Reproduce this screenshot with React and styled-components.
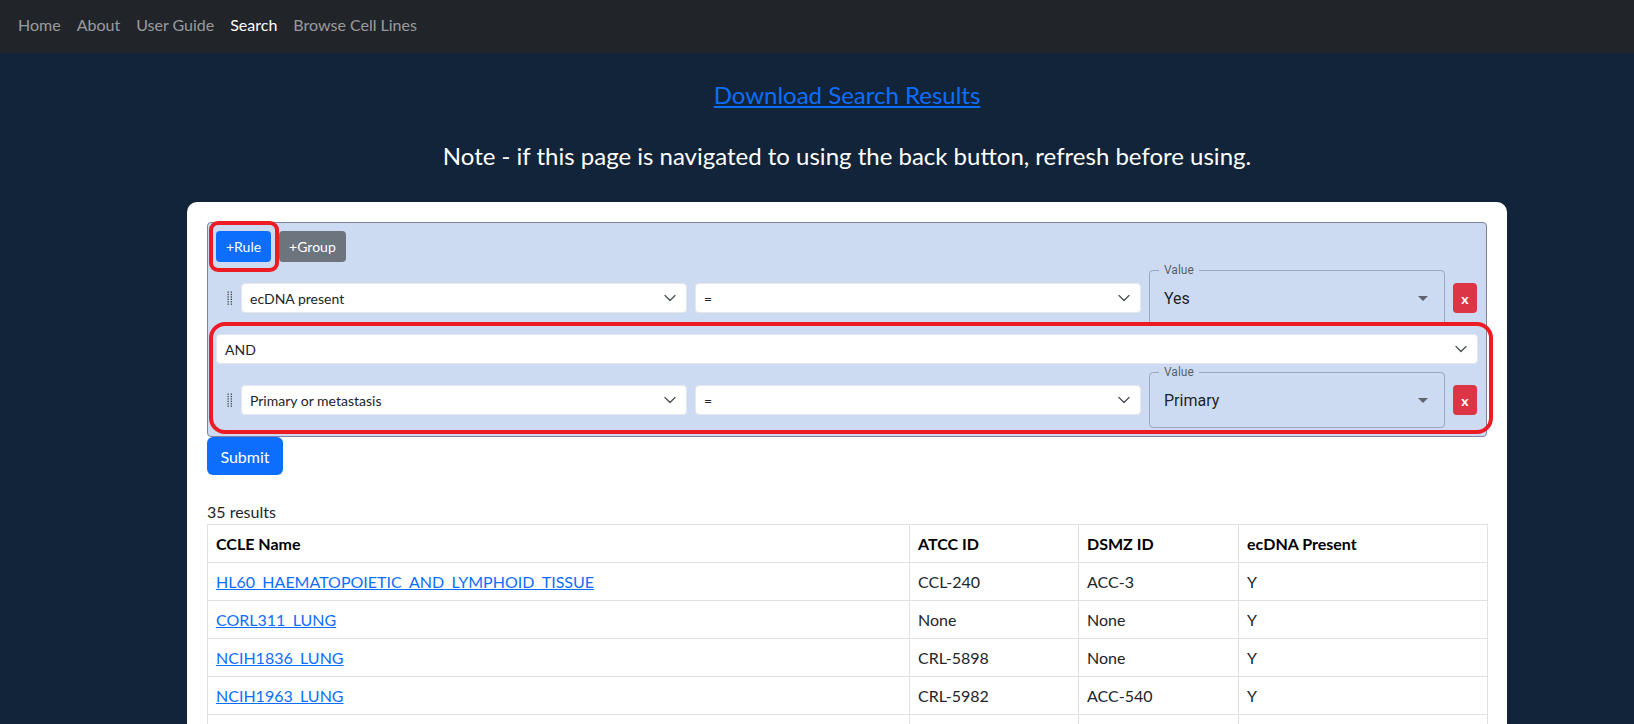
import React from "react";
import styled, { createGlobalStyle } from "styled-components";

const GlobalStyle = createGlobalStyle`
    body {
        margin: 0;
        background-color: #112439;
        font-family: Lato, "Liberation Sans", sans-serif;
        color: #212529;
        overflow: hidden;
    }
`

const Navbar = styled.nav`
    height: 53px;
    box-sizing: border-box;
    background-color: #212529;
    display: flex;
    align-items: center;
    padding: 0 10px 3px;
`

const NavLink = styled.a`
    padding: 8px;
    font-size: 16px;
    line-height: 24px;
    color: ${props => props.active ? '#ffffff' : 'rgba(255, 255, 255, 0.55)'};
    text-decoration: none;
`

const Main = styled.div`
    padding-left: 60px;
`

const Container = styled.div`
    max-width: 1320px;
    margin: 0 auto;
    display: flex;
    flex-direction: column;
    align-items: center;
`

const DownloadLink = styled.a`
    margin-top: 27px;
    font-size: 24px;
    line-height: 29px;
    color: #0d6efd;
    text-decoration: underline;
`

const Note = styled.div`
    margin-top: 32px;
    font-size: 24px;
    line-height: 29px;
    color: #ffffff;
`

const Card = styled.div`
    margin-top: 32px;
    width: 1320px;
    box-sizing: border-box;
    background-color: #ffffff;
    border-radius: 10px;
    padding: 20px;
`

const Builder = styled.div`
    position: relative;
    background-color: #ccdbf1;
    border: 1px solid #8081a2;
    border-radius: 4px;
    padding: 8px;
    display: flex;
    flex-direction: column;
    gap: 8px;
`

const Header = styled.div`
    display: flex;
    gap: 8px;
`

const SmallButton = styled.button`
    height: 31px;
    padding: 0 10px;
    border: none;
    border-radius: 4px;
    font-family: inherit;
    font-size: 14px;
    color: #ffffff;
    background-color: ${props => props.secondary ? '#6c757d' : '#0d6efd'};
`

const RuleRow = styled.div`
    display: flex;
    align-items: center;
    gap: 8px;
    height: 56px;
`

const Handle = styled.div`
    width: 17px;
    display: flex;
    justify-content: flex-end;
`

const Select = styled.div`
    width: ${props => props.width || '100%'};
    flex: none;
    height: 30px;
    box-sizing: border-box;
    background-color: #ffffff;
    border: 1px solid #e4e8ee;
    border-radius: 4px;
    padding: 0 8px;
    display: flex;
    align-items: center;
    justify-content: space-between;
    font-size: 14px;
    color: #212529;
`

const ValueBox = styled.div`
    position: relative;
    width: 296px;
    height: 56px;
    box-sizing: border-box;
    border: 1px solid rgba(0, 0, 0, 0.23);
    border-radius: 4px;
    padding: 0 9px 0 14px;
    display: flex;
    align-items: center;
    justify-content: space-between;
    font-family: Roboto, sans-serif;
    font-size: 16px;
    color: rgba(0, 0, 0, 0.87);
`

const ValueLabel = styled.span`
    position: absolute;
    top: -8px;
    left: 9px;
    padding: 0 5px;
    background-color: #ccdbf1;
    font-size: 12px;
    line-height: 14px;
    color: rgba(0, 0, 0, 0.6);
`

const RemoveButton = styled.button`
    width: 24px;
    height: 30px;
    padding: 0;
    border: none;
    border-radius: 4px;
    background-color: #dc3545;
    color: #ffffff;
    font-family: inherit;
    font-size: 14px;
    font-weight: bold;
`

const Highlight = styled.div`
    position: absolute;
    left: ${props => props.left}px;
    top: ${props => props.top}px;
    width: ${props => props.width}px;
    height: ${props => props.height}px;
    box-sizing: border-box;
    border: 4px solid #ed1c24;
    border-radius: ${props => props.radius}px;
    pointer-events: none;
`

const SubmitButton = styled.button`
    display: block;
    width: 76px;
    height: 38px;
    border: none;
    border-radius: 6px;
    background-color: #0d6efd;
    color: #ffffff;
    font-family: inherit;
    font-size: 16px;
`

const Results = styled.div`
    margin-top: 25px;
    font-size: 16px;
    line-height: 24px;
`

const Table = styled.table`
    width: 1280px;
    border-collapse: collapse;
    table-layout: fixed;
    font-size: 16px;
`

const Th = styled.th`
    border: 1px solid #dee2e6;
    padding: 7px 8px;
    line-height: 23px;
    text-align: left;
    font-weight: bold;
    color: #000000;
`

const Td = styled.td`
    border: 1px solid #dee2e6;
    padding: 7px 8px;
    line-height: 23px;
    color: #212529;
`

const CellLink = styled.a`
    color: #0d6efd;
    text-decoration: underline;
`

const Chevron = () => (
    <svg width="16" height="12" viewBox="0 2 16 12">
        <path fill="none" stroke="#4a4f55" strokeLinecap="round" strokeLinejoin="round" strokeWidth="1.3" d="m3 5.5 5 5 5-5" />
    </svg>
)

const DragDots = () => (
    <svg width="6" height="14" viewBox="0 0 6 14">
        {[0, 1, 2, 3, 4, 5].map(i => (
            <React.Fragment key={i}>
                <rect x="0.5" y={i * 2.4 + 0.5} width="1.3" height="1.3" fill="#444" />
                <rect x="3.7" y={i * 2.4 + 0.5} width="1.3" height="1.3" fill="#444" />
            </React.Fragment>
        ))}
    </svg>
)

const ArrowDrop = () => (
    <svg width="24" height="24" viewBox="0 0 24 24">
        <path d="M7 10l5 5 5-5z" fill="rgba(0,0,0,0.54)" />
    </svg>
)

const Rule = ({ field, value }) => (
    <RuleRow>
        <Handle><DragDots /></Handle>
        <Select width="446px">{field}<Chevron /></Select>
        <Select width="446px">=<Chevron /></Select>
        <ValueBox>
            <ValueLabel>Value</ValueLabel>
            {value}
            <ArrowDrop />
        </ValueBox>
        <RemoveButton>x</RemoveButton>
    </RuleRow>
)

const rows = [
    { name: "HL60_HAEMATOPOIETIC_AND_LYMPHOID_TISSUE", atcc: "CCL-240", dsmz: "ACC-3", ecdna: "Y" },
    { name: "CORL311_LUNG", atcc: "None", dsmz: "None", ecdna: "Y" },
    { name: "NCIH1836_LUNG", atcc: "CRL-5898", dsmz: "None", ecdna: "Y" },
    { name: "NCIH1963_LUNG", atcc: "CRL-5982", dsmz: "ACC-540", ecdna: "Y" },
]

const columns = [
    { title: "CCLE Name", width: 702 },
    { title: "ATCC ID", width: 169 },
    { title: "DSMZ ID", width: 160 },
    { title: "ecDNA Present", width: 249 },
]

const App = () => {
    const navItems = ["Home", "About", "User Guide", "Search", "Browse Cell Lines"];

    return (
        <>
            <GlobalStyle />
            <Navbar>
                {navItems.map(item => (
                    <NavLink key={item} active={item === "Search"}>{item}</NavLink>
                ))}
            </Navbar>
            <Main>
                <Container>
                    <DownloadLink href="#">Download Search Results</DownloadLink>
                    <Note>Note - if this page is navigated to using the back button, refresh before using.</Note>
                    <Card>
                        <Builder>
                            <Header>
                                <SmallButton>+Rule</SmallButton>
                                <SmallButton secondary>+Group</SmallButton>
                            </Header>
                            <Rule field="ecDNA present" value="Yes" />
                            <Select>AND<Chevron /></Select>
                            <Rule field="Primary or metastasis" value="Primary" />
                            <Highlight left={1} top={-2} width={70} height={51} radius={9} />
                            <Highlight left={1} top={99} width={1284} height={112} radius={16} />
                        </Builder>
                        <SubmitButton>Submit</SubmitButton>
                        <Results>35 results</Results>
                        <Table>
                            <colgroup>
                                {columns.map(col => <col key={col.title} style={{ width: col.width }} />)}
                            </colgroup>
                            <thead>
                                <tr>
                                    {columns.map(col => <Th key={col.title}>{col.title}</Th>)}
                                </tr>
                            </thead>
                            <tbody>
                                {rows.map(row => (
                                    <tr key={row.name}>
                                        <Td><CellLink href="#">{row.name}</CellLink></Td>
                                        <Td>{row.atcc}</Td>
                                        <Td>{row.dsmz}</Td>
                                        <Td>{row.ecdna}</Td>
                                    </tr>
                                ))}
                                <tr>
                                    <Td>&nbsp;</Td>
                                    <Td>&nbsp;</Td>
                                    <Td>&nbsp;</Td>
                                    <Td>&nbsp;</Td>
                                </tr>
                            </tbody>
                        </Table>
                    </Card>
                </Container>
            </Main>
        </>
    )
}

export default App;
